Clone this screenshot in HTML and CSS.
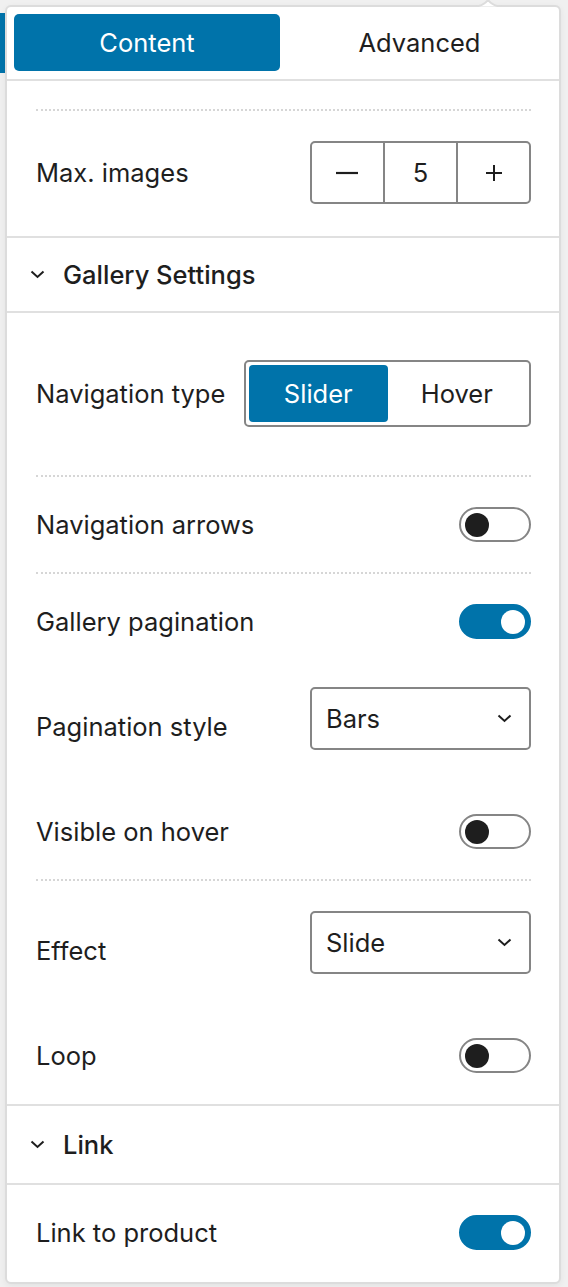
FILE: index.html
```html
<!DOCTYPE html>
<html lang="en">
<head>
<meta charset="utf-8">
<title>Block settings</title>
<link rel="stylesheet" href="styles.css">
</head>
<body>
<div class="panel">
  <svg class="notch" width="28" height="8" viewBox="0 0 28 8"><path d="M0 7.5 Q9 7.5 14 1 Q19 7.5 28 7.5" fill="#fff" stroke="#dcdcdc" stroke-width="2"/></svg>
  <div class="tabs">
    <div class="tab active">Content</div>
    <div class="tab">Advanced</div>
  </div>

  <div class="section">
    <div class="sep"></div>
    <div class="row">
      <span class="label">Max. images</span>
      <div class="stepper">
        <span class="cell btn"><svg width="22" height="4" viewBox="0 0 22 4"><path d="M0 2H22" stroke="#1e1e1e" stroke-width="2.2"/></svg></span>
        <span class="cell num">5</span>
        <span class="cell btn"><svg width="16" height="16" viewBox="0 0 16 16"><path d="M0 8H16M8 0V16" stroke="#1e1e1e" stroke-width="2"/></svg></span>
      </div>
    </div>
  </div>

  <div class="panel-header">
    <svg class="chev" width="15" height="9" viewBox="0 0 15 9"><path d="M1.5 1.5L7.5 7L13.5 1.5" fill="none" stroke="#1e1e1e" stroke-width="2"/></svg>
    <span>Gallery Settings</span>
  </div>

  <div class="section body">
    <div class="row row-seg">
      <span class="label">Navigation type</span>
      <div class="segmented">
        <span class="seg active">Slider</span>
        <span class="seg">Hover</span>
      </div>
    </div>
    <div class="sep"></div>
    <div class="row">
      <span class="label">Navigation arrows</span>
      <span class="toggle"><span class="knob"></span></span>
    </div>
    <div class="sep"></div>
    <div class="row">
      <span class="label">Gallery pagination</span>
      <span class="toggle on"><span class="knob"></span></span>
    </div>
    <div class="row row-select">
      <span class="label low">Pagination style</span>
      <div class="select"><span>Bars</span><svg width="15" height="9" viewBox="0 0 15 9"><path d="M1.5 1.5L7.5 7L13.5 1.5" fill="none" stroke="#1e1e1e" stroke-width="2"/></svg></div>
    </div>
    <div class="row">
      <span class="label">Visible on hover</span>
      <span class="toggle"><span class="knob"></span></span>
    </div>
    <div class="sep"></div>
    <div class="row row-select">
      <span class="label low">Effect</span>
      <div class="select"><span>Slide</span><svg width="15" height="9" viewBox="0 0 15 9"><path d="M1.5 1.5L7.5 7L13.5 1.5" fill="none" stroke="#1e1e1e" stroke-width="2"/></svg></div>
    </div>
    <div class="row">
      <span class="label">Loop</span>
      <span class="toggle"><span class="knob"></span></span>
    </div>
  </div>

  <div class="panel-header tall">
    <svg class="chev" width="15" height="9" viewBox="0 0 15 9"><path d="M1.5 1.5L7.5 7L13.5 1.5" fill="none" stroke="#1e1e1e" stroke-width="2"/></svg>
    <span>Link</span>
  </div>

  <div class="section last">
    <div class="row">
      <span class="label">Link to product</span>
      <span class="toggle on"><span class="knob"></span></span>
    </div>
  </div>
</div>
</body>
</html>
```

FILE: styles.css
```css
* { box-sizing: border-box; }

html, body { margin: 0; }

body {
  background:
    linear-gradient(#0073aa, #0073aa) 0 13px / 5px 60px no-repeat,
    #f0f0f0;
  padding: 5px 7px 4px 5px;
  font-family: Inter, "Noto Sans", sans-serif;
  font-size: 25.5px;
  color: #1e1e1e;
}

.panel {
  position: relative;
  width: 556px;
  background: #fff;
  border: 2px solid #dcdcdc;
  border-radius: 6px;
  box-shadow: 0 2px 6px rgba(0, 0, 0, 0.06);
}

.notch {
  position: absolute;
  left: 467px;
  top: -8px;
}

.tabs {
  display: grid;
  grid-template-columns: 266px 1fr;
  padding: 7px 0 8px 7px;
  border-bottom: 2px solid #e0e0e0;
}

.tab {
  height: 57px;
  display: flex;
  align-items: center;
  justify-content: center;
  border-radius: 5px;
}

.tab.active {
  background: #0073aa;
  color: #fff;
}

.section {
  padding: 28px 28px 32px 29px;
  border-bottom: 2px solid #e0e0e0;
}

.section.body {
  padding-top: 47px;
  padding-bottom: 31px;
}

.section.last {
  padding-top: 30px;
  padding-bottom: 32px;
  border-bottom: none;
}

.sep {
  border-top: 2px dotted #d6d6d6;
  margin: 30px 0;
}

.section > .sep:first-child { margin-top: 0; }

.row {
  display: flex;
  align-items: center;
  justify-content: space-between;
}

.row + .row { margin-top: 48px; }

.row-seg { padding-bottom: 18px; }
.row-select { padding-bottom: 16px; }

.label { line-height: 30px; }
.label.low { padding-top: 16px; }

.stepper {
  display: flex;
  width: 221px;
  height: 63px;
  border: 2px solid #858585;
  border-radius: 5px;
}

.cell {
  display: flex;
  align-items: center;
  justify-content: center;
}

.cell.btn { width: 71px; }

.cell.num {
  width: 76px;
  border-left: 2px solid #858585;
  border-right: 2px solid #858585;
}

.panel-header {
  height: 75px;
  display: flex;
  align-items: center;
  padding-left: 23px;
  border-bottom: 2px solid #e0e0e0;
  font-weight: 500;
}

.panel-header.tall { height: 79px; }

.chev { margin-right: 18px; }

.segmented {
  display: grid;
  grid-template-columns: 1fr 1fr;
  width: 287px;
  height: 67px;
  padding: 3px;
  border: 2px solid #858585;
  border-radius: 5px;
}

.seg {
  display: flex;
  align-items: center;
  justify-content: center;
  border-radius: 4px;
}

.seg.active {
  background: #0073aa;
  color: #fff;
}

.toggle {
  position: relative;
  width: 72px;
  height: 35px;
  border: 2px solid #858585;
  border-radius: 18px;
  display: flex;
  align-items: center;
  padding-left: 4px;
}

.knob {
  width: 24px;
  height: 24px;
  border-radius: 50%;
  background: #1e1e1e;
}

.toggle.on {
  background: #0073aa;
  border-color: #0073aa;
  justify-content: flex-end;
  padding: 0 4px 0 0;
}

.toggle.on .knob { background: #fff; }

.select {
  width: 221px;
  height: 63px;
  border: 2px solid #858585;
  border-radius: 5px;
  display: flex;
  align-items: center;
  justify-content: space-between;
  padding: 0 17px 0 14px;
}
```
